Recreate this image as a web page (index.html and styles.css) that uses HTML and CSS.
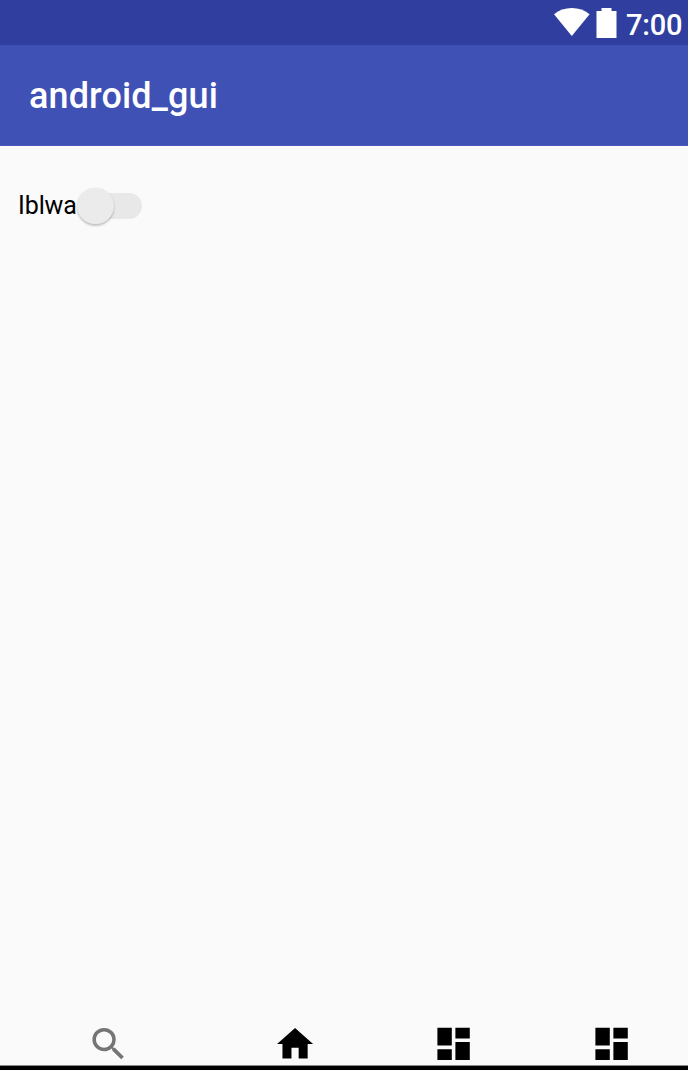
FILE: index.html
```html
<!DOCTYPE html>
<html lang="en">
<head>
<meta charset="utf-8">
<title>android_gui</title>
<link rel="stylesheet" href="styles.css">
</head>
<body>
<div class="screen">
  <div class="status-bar">
    <svg class="wifi" viewBox="0 0 36 28"><path d="M0 6.2C5 2.200 11 0 17.800 0S30.600 2.200 35.600 6.200L17.800 28Z"/></svg>
    <svg class="battery" viewBox="0 0 21 30"><path d="M5.500 0H15.500V3H20.500V30H0.500V3H5.500Z"/></svg>
    <span class="clock">7:00</span>
  </div>
  <header class="app-bar"><h1 class="title">android_gui</h1></header>
  <main class="content">
    <label class="switch-row">
      <span class="switch-label">Iblwa</span>
      <span class="track"><span class="thumb"></span></span>
    </label>
  </main>
  <nav class="bottom-nav">
    <svg class="icon search" viewBox="0 0 24 24"><path d="M15.500 14h-.79l-.28-.27A6.471 6.471 0 0 0 16 9.500 6.500 6.500 0 1 0 9.500 16c1.610 0 3.090-.59 4.230-1.570l.27.28v.79l5 4.990L20.490 19l-4.990-5zm-6 0C7.010 14 5 11.990 5 9.500S7.010 5 9.500 5 14 7.010 14 9.500 11.990 14 9.500 14z"/></svg>
    <svg class="icon home" viewBox="0.3 0 24 24"><path d="M10 20v-6h4v6h5v-8h3L12 3 2 12h3v8z"/></svg>
    <svg class="icon dashboard" viewBox="0 0.15 24 24"><path d="M3 13h8V3H3v10zm0 8h8v-6H3v6zm10 0h8V11h-8v10zm0-18v6h8V3h-8z"/></svg>
    <svg class="icon dashboard" viewBox="0 0.15 24 24"><path d="M3 13h8V3H3v10zm0 8h8v-6H3v6zm10 0h8V11h-8v10zm0-18v6h8V3h-8z"/></svg>
  </nav>
</div>
</body>
</html>
```
FILE: styles.css
```css
* { box-sizing: border-box; }

body {
  margin: 0;
  font-family: Roboto, sans-serif;
  background: #fafafa;
}

.screen {
  display: flex;
  flex-direction: column;
  height: 1070px;
  overflow: hidden;
}

.status-bar {
  display: flex;
  align-items: flex-start;
  justify-content: flex-end;
  height: 45px;
  padding: 8px 6px 0 0;
  background: #303f9f;
  color: #fff;
  fill: #fff;
}

.wifi { width: 36px; height: 28px; margin-right: 6px; }
.battery { width: 21px; height: 30px; margin-right: 9px; }

.clock {
  width: 56px;
  padding-top: 1px;
  font-size: 29px;
  line-height: 33px;
  font-weight: 500;
  letter-spacing: -0.200px;
}

.app-bar {
  display: flex;
  align-items: center;
  height: 101px;
  padding: 2px 0 0 29px;
  background: #3f51b5;
  border-bottom: 1px solid #4b5cba;
  color: #fff;
}

.title {
  margin: 0;
  font-size: 36px;
  line-height: 42px;
  font-weight: 500;
  letter-spacing: 0.120px;
}

.content {
  flex: 1;
  padding: 41px 0 0 18px;
}

.switch-row {
  display: inline-flex;
  align-items: center;
  height: 38px;
}

.switch-label {
  width: 59px;
  font-size: 25px;
  line-height: 30px;
  letter-spacing: -0.100px;
  color: #000;
}

.track {
  display: flex;
  align-items: center;
  width: 65px;
  height: 26px;
  border-radius: 13px;
  background: linear-gradient(90deg, transparent 18px, #e8e8e8 18px);
}

.thumb {
  flex: none;
  width: 36.500px;
  height: 36px;
  border-radius: 50%;
  background: #ebebeb;
  box-shadow: 0 2px 2px rgba(0, 0, 0, .2), 0 0 2px rgba(0, 0, 0, .08);
}

.bottom-nav {
  display: flex;
  height: 47.500px;
  padding-left: 86.500px;
  border-bottom: 4px solid #000;
  box-shadow: inset 0 -1px #8a8a8a;
  background: #fafafa;
}

.icon {
  flex: none;
  width: 43.200px;
  height: 43.200px;
  transform: translateY(-0.500px);
}
.search { margin-right: 144px; fill: #757575; }
.home { margin-right: 115px; }
.dashboard { margin-right: 115px; }
```
